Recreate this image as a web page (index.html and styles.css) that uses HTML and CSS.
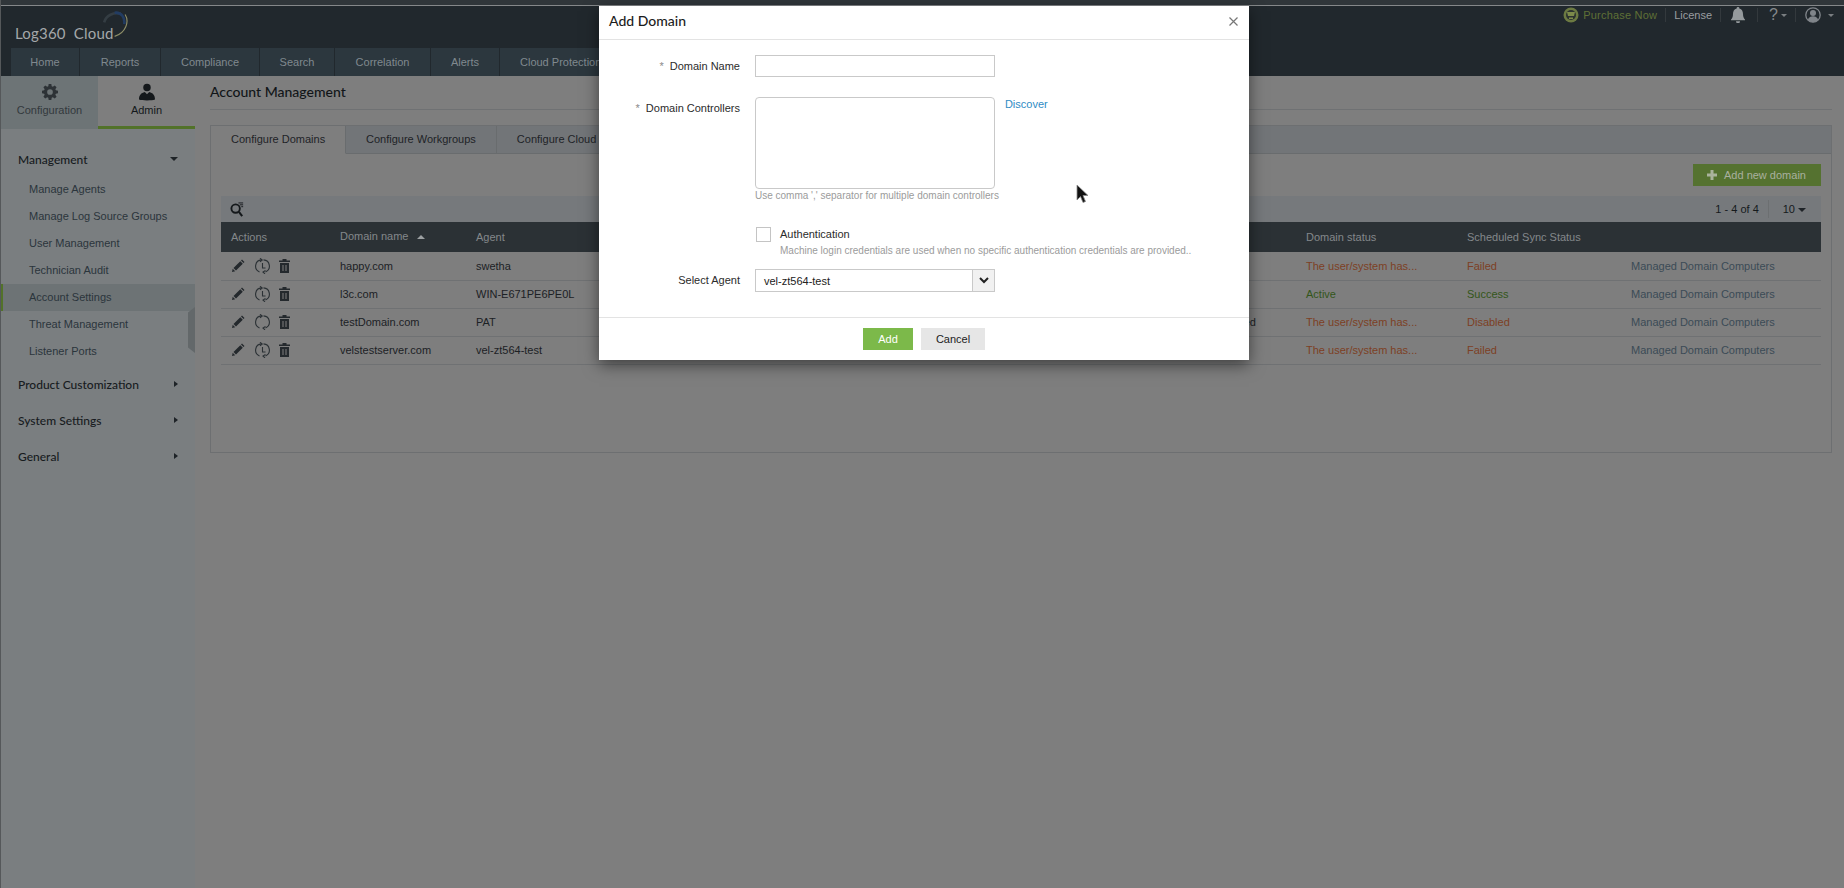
FILE: index.html
```html
<!DOCTYPE html>
<html lang="en">
<head>
<meta charset="utf-8">
<title>Add Domain</title>
<link rel="stylesheet" href="styles.css">
</head>
<body>
<div class="page">
  <header class="header">
    <div class="masthead">
      <div class="logo">
        <span class="logo-text">Log360&nbsp; Cloud</span>
        <svg class="logo-arc" width="27" height="28" viewBox="0 0 30 32" fill="none">
          <path d="M2 13C4 5 13 1 21 3" stroke="#343d43" stroke-width="3"/>
          <path d="M14 2C22 1 26 8 25 15" stroke="#223c62" stroke-width="3"/>
          <path d="M26 4C31 12 27 25 14 29" stroke="#8f8f68" stroke-width="1.3"/>
        </svg>
      </div>
      <div class="utility">
        <svg class="purchase-icon" width="16" height="16" viewBox="0 0 16 16"><circle cx="8" cy="8" r="7.5" fill="#6c7a42"/><circle cx="8" cy="8" r="5" fill="#2c3330"/><path d="M4 5h8l-1 4H5zM6 10.500h4v1.500H6z" fill="#7c8a4a"/></svg>
        <a class="purchase">Purchase Now</a>
        <span class="util-sep"></span>
        <a class="license">License</a>
        <span class="util-sep"></span>
        <svg class="bell" width="14" height="16" viewBox="0 0 14 16"><path d="M7 0a1.300 1.300 0 0 1 1.300 1.500C11 2.200 12 4.500 12 7c0 3 1 4.500 2 5.500v.8H0v-.8C1 11.500 2 10 2 7c0-2.500 1-4.800 3.700-5.500A1.300 1.300 0 0 1 7 0zM5 14.200h4a2 2 0 0 1-4 0z" fill="#959a9d"/></svg>
        <span class="util-sep"></span>
        <span class="help">?</span><span class="caret-sm"></span>
        <span class="util-sep"></span>
        <svg class="user" width="16" height="16" viewBox="0 0 16 16" fill="none"><circle cx="8" cy="8" r="7.200" stroke="#80858a" stroke-width="1.300"/><circle cx="8" cy="6" r="3" fill="#80858a"/><path d="M2.800 13c1-3 3-3.800 5.200-3.800s4.200.8 5.200 3.800A7 7 0 0 1 2.800 13z" fill="#80858a"/></svg>
        <span class="caret-sm caret-user"></span>
      </div>
    </div>
    <nav class="nav">
      <a class="nav-item nav-home">Home</a>
      <a class="nav-item nav-reports">Reports</a>
      <a class="nav-item nav-compliance">Compliance</a>
      <a class="nav-item nav-search">Search</a>
      <a class="nav-item nav-correlation">Correlation</a>
      <a class="nav-item nav-alerts">Alerts</a>
      <a class="nav-item nav-cloud">Cloud Protection</a>
    </nav>
  </header>

  <div class="workspace">
    <aside class="sidebar">
      <div class="side-tabs">
        <div class="side-tab">
          <svg width="16" height="16" viewBox="0 0 18 18"><path fill="#2d3236" fill-rule="evenodd" d="M7.500 0h3l.4 2.400 1.300.6L14.300 1.600l2.100 2.100L15 5.800l.6 1.300L18 7.500v3l-2.400.4-.6 1.300 1.400 2.100-2.100 2.100L12.200 15l-1.300.6-.4 2.400h-3l-.4-2.400-1.300-.6-2.100 1.400-2.100-2.100L3 12.200l-.6-1.300L0 10.500v-3l2.400-.4.6-1.300L1.600 3.700l2.100-2.100L5.800 3l1.300-.6zM9 5.800a3.200 3.200 0 1 0 0 6.400 3.200 3.200 0 0 0 0-6.400z"/></svg>
          <span>Configuration</span>
        </div>
        <div class="side-tab side-tab-active">
          <svg width="16" height="18" viewBox="0 0 18 19"><circle cx="9" cy="4.500" r="4.200" fill="#14181b"/><path fill="#14181b" d="M0 18c0-5 2.500-7.500 6.500-8.500L9 12l2.500-2.500c4 1 6.500 3.500 6.500 8.500-2 .8-5 1-9 1s-7-.2-9-1z"/></svg>
          <span>Admin</span>
        </div>
      </div>
      <div class="menu">
        <div class="menu-head menu-head-first"><span>Management</span><i class="arrow-down"></i></div>
        <ul class="menu-list">
          <li>Manage Agents</li>
          <li>Manage Log Source Groups</li>
          <li>User Management</li>
          <li>Technician Audit</li>
          <li class="menu-active">Account Settings</li>
          <li>Threat Management</li>
          <li>Listener Ports</li>
        </ul>
        <div class="menu-head menu-head-next"><span>Product Customization</span><i class="arrow-right"></i></div>
        <div class="menu-head"><span>System Settings</span><i class="arrow-right"></i></div>
        <div class="menu-head"><span>General</span><i class="arrow-right"></i></div>
      </div>
      <div class="collapse-handle"></div>
    </aside>

    <main class="main">
      <h1 class="page-title">Account Management</h1>
      <section class="panel">
        <div class="tabs">
          <a class="tab tab-active">Configure Domains</a>
          <a class="tab">Configure Workgroups</a>
          <a class="tab tab-plain">Configure Cloud</a>
        </div>
        <div class="panel-body">
          <div class="actions-row">
            <a class="add-btn"><svg width="10" height="10" viewBox="0 0 10 10"><path d="M3.500 0h3v3.500H10v3H6.500V10h-3V6.500H0v-3h3.500z" fill="#aab39c"/></svg>Add new domain</a>
          </div>
          <div class="grid-toolbar">
            <svg width="15" height="15" viewBox="0 0 16 16" fill="none"><circle cx="6" cy="7" r="4.500" stroke="#14181b" stroke-width="2"/><path d="M9.500 10.500 13 15" stroke="#14181b" stroke-width="2.200"/><path d="M9 1h5M10.500 3h3.500M12 5h2" stroke="#14181b"/></svg>
            <div class="pager">
              <span class="pager-count">1 - 4 of 4</span>
              <span class="pager-size">10<i class="arrow-down arrow-dark"></i></span>
            </div>
          </div>
          <table class="grid">
            <colgroup>
              <col class="c-actions"><col class="c-domain"><col class="c-agent"><col class="c-hidden"><col class="c-status"><col class="c-sync"><col class="c-link">
            </colgroup>
            <thead>
              <tr>
                <th>Actions</th>
                <th><span class="th-sort">Domain name<i class="arrow-up"></i></span></th>
                <th>Agent</th>
                <th></th>
                <th>Domain status</th>
                <th>Scheduled Sync Status</th>
                <th></th>
              </tr>
            </thead>
            <tbody>
              <tr>
                <td class="row-icons">
                  <svg class="ic" width="14" height="14" viewBox="0 0 14 14"><use href="#ic-edit"/></svg>
                  <svg class="ic" width="15" height="16" viewBox="0 0 15 16"><use href="#ic-sync-clock"/></svg>
                  <svg class="ic" width="11" height="14" viewBox="0 0 11 14"><use href="#ic-trash"/></svg>
                </td>
                <td>happy.com</td><td>swetha</td><td></td>
                <td class="bad">The user/system has...</td><td class="bad">Failed</td><td class="link">Managed Domain Computers</td>
              </tr>
              <tr>
                <td class="row-icons">
                  <svg class="ic" width="14" height="14" viewBox="0 0 14 14"><use href="#ic-edit"/></svg>
                  <svg class="ic" width="15" height="16" viewBox="0 0 15 16"><use href="#ic-sync-clock"/></svg>
                  <svg class="ic" width="11" height="14" viewBox="0 0 11 14"><use href="#ic-trash"/></svg>
                </td>
                <td>l3c.com</td><td>WIN-E671PE6PE0L</td><td></td>
                <td class="good">Active</td><td class="good">Success</td><td class="link">Managed Domain Computers</td>
              </tr>
              <tr>
                <td class="row-icons">
                  <svg class="ic" width="14" height="14" viewBox="0 0 14 14"><use href="#ic-edit"/></svg>
                  <svg class="ic" width="15" height="16" viewBox="0 0 15 16"><use href="#ic-sync"/></svg>
                  <svg class="ic" width="11" height="14" viewBox="0 0 11 14"><use href="#ic-trash"/></svg>
                </td>
                <td>testDomain.com</td><td>PAT</td><td class="cell-end">Configured</td>
                <td class="bad">The user/system has...</td><td class="bad">Disabled</td><td class="link">Managed Domain Computers</td>
              </tr>
              <tr>
                <td class="row-icons">
                  <svg class="ic" width="14" height="14" viewBox="0 0 14 14"><use href="#ic-edit"/></svg>
                  <svg class="ic" width="15" height="16" viewBox="0 0 15 16"><use href="#ic-sync-clock"/></svg>
                  <svg class="ic" width="11" height="14" viewBox="0 0 11 14"><use href="#ic-trash"/></svg>
                </td>
                <td>velstestserver.com</td><td>vel-zt564-test</td><td></td>
                <td class="bad">The user/system has...</td><td class="bad">Failed</td><td class="link">Managed Domain Computers</td>
              </tr>
            </tbody>
          </table>
        </div>
      </section>
    </main>
  </div>
</div>

<div class="modal">
  <div class="modal-head">
    <h2 class="modal-title">Add Domain</h2>
    <svg class="modal-close" width="9" height="9" viewBox="0 0 9 9"><path d="M.5.500l8 8M8.500.500l-8 8" stroke="#777" stroke-width="1.200"/></svg>
  </div>
  <div class="modal-body">
    <div class="form-row">
      <label class="form-label"><em>*</em>Domain Name</label>
      <input class="field field-input" type="text">
    </div>
    <div class="form-row form-row-controllers">
      <label class="form-label form-label-ta"><em>*</em>Domain Controllers</label>
      <div class="field-stack">
        <textarea class="field field-area"></textarea>
        <p class="hint">Use comma ',' separator for multiple domain controllers</p>
      </div>
      <a class="discover">Discover</a>
    </div>
    <div class="form-row form-row-auth">
      <span class="form-label"></span>
      <span class="check"></span>
      <div class="auth-text">
        <div class="auth-title">Authentication</div>
        <div class="auth-note">Machine login credentials are used when no specific authentication credentials are provided..</div>
      </div>
    </div>
    <div class="form-row form-row-agent">
      <label class="form-label">Select Agent</label>
      <div class="select">
        <span class="select-value">vel-zt564-test</span>
        <span class="select-btn"><svg width="10" height="7" viewBox="0 0 10 7" fill="none"><path d="M1 1l4 4 4-4" stroke="#222" stroke-width="2"/></svg></span>
      </div>
    </div>
  </div>
  <div class="modal-foot">
    <a class="btn btn-add">Add</a>
    <a class="btn btn-cancel">Cancel</a>
  </div>
</div>

<svg class="cursor" width="13" height="20" viewBox="0 0 13 20"><path d="M1 1v15l3.500-3.500 2.500 6 2.500-1-2.500-6h5z" fill="#111" stroke="#8a8a8a" stroke-width=".8"/></svg>

<svg class="sprites" width="0" height="0">
  <defs>
    <g id="ic-edit"><path d="M1 13l.7-3.200 2.500 2.500zM2.500 9l6.800-6.800 2.500 2.500L5 11.500zM10 1.500l1-1 2.500 2.500-1 1z" fill="#24292d"/></g>
    <g id="ic-sync" fill="none" stroke="#2b3135" stroke-width="1.100"><path d="M4.500 14A6.300 6.300 0 0 1 6.500 1.900"/><path d="M8.500 1.900A6.300 6.300 0 0 1 10.500 14"/><path d="M5 .3 7.200 2 5 3.700M10 15.800 8 14l2.500-1.500"/></g>
    <g id="ic-sync-clock"><use href="#ic-sync"/><path d="M7.500 5v5h3" fill="none" stroke="#2b3135" stroke-width="1.100"/></g>
    <g id="ic-trash" fill="#24292d"><path d="M3.500 0h4v1.500H11V3H0V1.500h3.500z"/><path fill-rule="evenodd" d="M1 4h9v10H1zM3.500 6v6h1V6zM6.500 6v6h1V6z"/></g>
  </defs>
</svg>
</body>
</html>
```
FILE: styles.css
```css
* { box-sizing: border-box; }
html, body { margin: 0; height: 100%; }
body {
  background: #7e7e7e;
  font-family: "Liberation Sans", Arial, sans-serif;
  font-size: 11px;
  color: #1c2125;
  overflow: hidden;
}
a { text-decoration: none; }
.page {
  height: 888px;
  display: flex;
  flex-direction: column;
  border-left: 1px solid #55585a;
}
.header {
  height: 76px;
  flex: none;
  background: #21282d;
  border-top: 5px solid #30363a;
  box-shadow: inset 0 1px 0 #85888a;
  display: flex;
  flex-direction: column;
}
.masthead {
  flex: 1;
  display: flex;
  justify-content: space-between;
  position: relative;
}
.logo {
  display: flex;
  align-items: flex-end;
  padding: 0 0 3px 14px;
}
.logo-text {
  font-family: Lato, sans-serif;
  font-size: 15px;
  color: #a4a7a9;
  white-space: nowrap;
  line-height: 24px;
  letter-spacing: .2px;
}
.logo-arc { margin: 0 0 6px -12px; }
.utility {
  display: flex;
  align-items: flex-start;
  padding: 2px 10px 0 0;
  height: 20px;
  color: #a8acae;
}
.purchase-icon { margin: 0 4px 0 0; }
.purchase { color: #5f7036; line-height: 16px; letter-spacing: .2px; }
.license { color: #9a9da0; line-height: 16px; }
.util-sep {
  width: 1px;
  height: 14px;
  background: #33393d;
  margin: 1px 8px 0;
}
.bell { margin: 0 4px 0 2px; }
.help { font-size: 16px; line-height: 16px; color: #84888b; margin-left: 3px; }
.caret-sm {
  width: 0;
  height: 0;
  border: 3px solid transparent;
  border-top: 3px solid #7a7e81;
  border-bottom: 0;
  margin: 7px 0 0 3px;
}
.caret-user { margin-left: 7px; }
.user { margin-left: 1px; }
.nav {
  height: 28px;
  display: flex;
  padding-left: 10px;
  flex: none;
}
.nav-item {
  display: flex;
  align-items: center;
  justify-content: center;
  color: #80898f;
  background: #2c373e;
  border-right: 1px solid #21282d;
  white-space: nowrap;
}
.nav-home { width: 69px; }
.nav-reports { width: 81px; }
.nav-compliance { width: 99px; }
.nav-search { width: 75px; }
.nav-correlation { width: 96px; }
.nav-alerts { width: 69px; }
.nav-cloud { width: 120px; justify-content: flex-start; padding-left: 20px; }

.workspace {
  flex: 1;
  display: flex;
  min-height: 0;
}
.sidebar {
  width: 194px;
  flex: none;
  background: #7a7e80;
  position: relative;
}
.side-tabs {
  display: flex;
  height: 53px;
}
.side-tab {
  width: 97px;
  display: flex;
  flex-direction: column;
  align-items: center;
  padding-top: 8px;
  gap: 4px;
  background: #6d7476;
  color: #33393d;
}
.side-tab span { line-height: 12px; }
.side-tab-active {
  background: #7e7e7e;
  color: #14181b;
  border-bottom: 3px solid #527229;
  padding-top: 7px;
  gap: 3px;
}
.menu { padding-top: 21px; }
.menu-head {
  display: flex;
  align-items: center;
  justify-content: space-between;
  height: 18px;
  padding: 0 17px;
  font-family: Lato, sans-serif;
  font-size: 12px;
  font-weight: 500;
  color: #171b1e;
  margin-bottom: 18px;
}
.menu-head-first { margin-bottom: 8px; }
.menu-head-next { margin-top: 10px; }
.arrow-down {
  width: 0;
  height: 0;
  border-left: 4px solid transparent;
  border-right: 4px solid transparent;
  border-top: 4px solid #1e2327;
}
.arrow-right {
  width: 0;
  height: 0;
  border-top: 3.500px solid transparent;
  border-bottom: 3.500px solid transparent;
  border-left: 4px solid #1e2327;
}
.arrow-up {
  display: inline-block;
  width: 0;
  height: 0;
  border-left: 4px solid transparent;
  border-right: 4px solid transparent;
  border-bottom: 4px solid #9ca0a2;
  margin-left: 9px;
  vertical-align: 1px;
}
.arrow-dark { display: inline-block; margin-left: 3px; vertical-align: 1px; }
.menu-list {
  list-style: none;
  margin: 0;
  padding: 0;
}
.menu-list li {
  height: 27px;
  line-height: 27px;
  padding-left: 28px;
  color: #2b353c;
}
.menu-list .menu-active {
  background: #6d7375;
  box-shadow: inset 2px 0 0 #527229;
}
.collapse-handle {
  position: absolute;
  right: 0;
  top: 231px;
  width: 7px;
  height: 46px;
  background: #63686a;
  clip-path: polygon(100% 0, 100% 100%, 0 88%, 0 12%);
}

.main {
  flex: 1;
  min-width: 0;
  padding: 0 12px 0 15px;
}
.page-title {
  margin: 0 0 15px;
  height: 34px;
  border-bottom: 1px solid #6f7173;
  font-family: Lato, sans-serif;
  font-size: 14px;
  font-weight: 500;
  line-height: 32px;
  color: #111518;
}
.panel {
  height: 328px;
  border: 1px solid #6d6f71;
}
.tabs {
  height: 28px;
  display: flex;
  background: #727578;
  border-bottom: 1px solid #696c6e;
}
.tab {
  display: flex;
  align-items: center;
  height: 28px;
  padding: 0 20px 2px;
  color: #1e2327;
  border-right: 1px solid #696c6e;
  white-space: nowrap;
}
.tab-active {
  width: 135px;
  background: #7e7e7e;
  border-bottom: 1px solid #7e7e7e;
}
.tab-plain { border-right: 0; }
.panel-body { padding: 10px 10px 0; }
.actions-row {
  display: flex;
  justify-content: flex-end;
  height: 22px;
  margin-bottom: 10px;
}
.add-btn {
  display: flex;
  align-items: center;
  gap: 7px;
  width: 128px;
  padding-left: 14px;
  background: #557230;
  color: #a9b09f;
}
.grid-toolbar {
  height: 26px;
  display: flex;
  align-items: center;
  justify-content: space-between;
  background: #76797c;
  padding: 0 15px 0 9px;
}
.pager { display: flex; align-items: center; color: #15191c; }
.pager-count { padding-right: 9px; border-right: 1px solid #6c6f71; line-height: 18px; }
.pager-size { padding-left: 14px; }
.grid {
  width: 1600px;
  table-layout: fixed;
  border-collapse: collapse;
}
.c-actions { width: 109px; }
.c-domain { width: 136px; }
.c-agent { width: 370px; }
.c-hidden { width: 460px; }
.c-status { width: 161px; }
.c-sync { width: 164px; }
.c-link { width: 200px; }
.grid th {
  height: 30px;
  padding: 0 0 0 10px;
  background: #2b3135;
  color: #84888b;
  font-weight: 400;
  text-align: left;
  white-space: nowrap;
}
.th-sort { position: relative; top: -1px; }
.grid td {
  height: 28px;
  padding: 0 0 0 10px;
  border-bottom: 1px solid #6f7173;
  white-space: nowrap;
  overflow: hidden;
  color: #1c2125;
}
.grid .row-icons { padding-left: 10px; }
.row-icons { font-size: 0; }
.ic { vertical-align: middle; margin-right: 10px; }
.ic:nth-child(2) { margin-right: 9px; }
.grid .bad { color: #7d4024; }
.grid .good { color: #33561a; }
.grid .link { color: #3b4b56; }
.grid .cell-end { text-align: right; padding-right: 40px; }

.modal {
  position: absolute;
  left: 599px;
  top: 6px;
  width: 650px;
  height: 354px;
  background: #fff;
  box-shadow: 0 5px 15px rgba(0, 0, 0, .5);
  display: flex;
  flex-direction: column;
}
.modal-head {
  height: 34px;
  flex: none;
  border-bottom: 1px solid #e3e3e3;
  display: flex;
  align-items: center;
  justify-content: space-between;
  padding: 0 11px 4px 10px;
}
.modal-title {
  margin: 0;
  font-family: Lato, sans-serif;
  font-size: 14px;
  font-weight: 500;
  color: #1c1c1c;
}
.modal-close { margin-top: 1px; }
.modal-body { flex: 1; padding-top: 15px; }
.form-row { display: flex; align-items: flex-start; color: #2b2b2b; }
.form-row-controllers { margin-top: 20px; }
.form-row-auth { margin-top: 25px; }
.form-row-agent { margin-top: 12px; }
.form-label {
  width: 141px;
  margin-right: 15px;
  text-align: right;
  line-height: 22px;
  white-space: nowrap;
  flex: none;
}
.form-label-ta { line-height: 23px; }
.form-label em {
  font-style: normal;
  color: #8a8a8a;
  margin-right: 6px;
}
.field {
  display: block;
  width: 240px;
  margin: 0;
  border: 1px solid #c9c9c9;
  background: #fff;
  outline: 0;
}
.field-input { height: 22px; border-radius: 0; }
.field-area { height: 92px; border-radius: 4px; resize: none; }
.hint { margin: 1px 0 0; line-height: 12px; color: #9b9b9b; font-size: 10px; white-space: nowrap; }
.discover { color: #2f8cc4; margin: 0 0 0 6px; line-height: 14px; }
.check {
  width: 15px;
  height: 15px;
  border: 1px solid #c4c4c4;
  margin: 0 9px 0 1px;
  flex: none;
}
.auth-title { color: #2b2b2b; line-height: 14px; }
.auth-note { color: #9b9b9b; font-size: 10px; line-height: 12px; margin-top: 4px; white-space: nowrap; }
.select {
  width: 240px;
  height: 23px;
  border: 1px solid #c9c9c9;
  display: flex;
  align-items: center;
  justify-content: space-between;
}
.select-value { padding-left: 8px; color: #222; }
.select-btn {
  width: 22px;
  height: 21px;
  background: #f1f1f1;
  border-left: 1px solid #c9c9c9;
  display: flex;
  align-items: center;
  justify-content: center;
}
.modal-foot {
  height: 43px;
  flex: none;
  border-top: 1px solid #e3e3e3;
  display: flex;
  justify-content: center;
  align-items: flex-start;
  padding: 10px 0 0;
  gap: 8px;
}
.btn {
  height: 22px;
  display: flex;
  align-items: center;
  justify-content: center;
}
.btn-add { width: 50px; background: #7cb94a; color: #fff; }
.btn-cancel { width: 64px; background: #e6e6e6; color: #222; }
.cursor {
  position: absolute;
  left: 1076px;
  top: 184px;
}
.sprites { position: absolute; }
```
